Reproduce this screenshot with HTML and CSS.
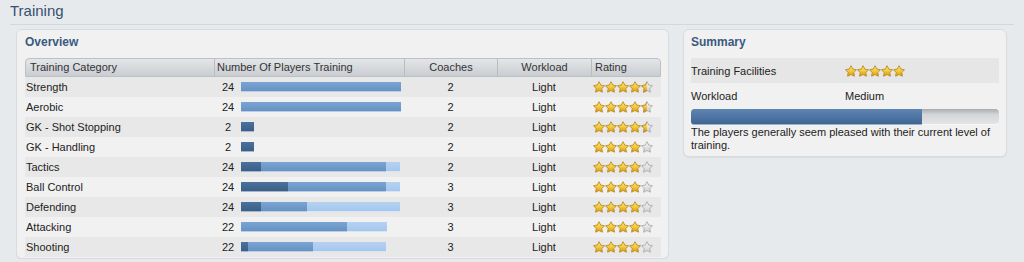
FILE: index.html
```html
<!DOCTYPE html>
<html lang="en">
<head>
  <meta charset="UTF-8">
  <title>Training</title>
  <link rel="stylesheet" href="styles.css">
</head>
<body>
  <h1 class="page-title">Training</h1>

  <div class="content">
    <div class="card overview">
      <h2>Overview</h2>
      <div class="grid">
        <div class="row head">
          <div class="cell cat">Training Category</div>
          <div class="cell num">Number Of Players Training</div>
          <div class="cell mid">Coaches</div>
          <div class="cell mid">Workload</div>
          <div class="cell rate">Rating</div>
        </div>

        <div class="row">
          <div class="cell cat">Strength</div>
          <div class="cell num"><span class="count">24</span><span class="bar"><i class="mid-seg" style="width:160px"></i></span></div>
          <div class="cell mid">2</div>
          <div class="cell mid">Light</div>
          <div class="cell rate"><svg class="stars"><use href="#s-full" x="0"/><use href="#s-full" x="12"/><use href="#s-full" x="24"/><use href="#s-full" x="36"/><use href="#s-half" x="48"/></svg></div>
        </div>
        <div class="row">
          <div class="cell cat">Aerobic</div>
          <div class="cell num"><span class="count">24</span><span class="bar"><i class="mid-seg" style="width:160px"></i></span></div>
          <div class="cell mid">2</div>
          <div class="cell mid">Light</div>
          <div class="cell rate"><svg class="stars"><use href="#s-full" x="0"/><use href="#s-full" x="12"/><use href="#s-full" x="24"/><use href="#s-full" x="36"/><use href="#s-half" x="48"/></svg></div>
        </div>
        <div class="row">
          <div class="cell cat">GK - Shot Stopping</div>
          <div class="cell num"><span class="count">2</span><span class="bar"><i class="dark-seg" style="width:13px"></i></span></div>
          <div class="cell mid">2</div>
          <div class="cell mid">Light</div>
          <div class="cell rate"><svg class="stars"><use href="#s-full" x="0"/><use href="#s-full" x="12"/><use href="#s-full" x="24"/><use href="#s-full" x="36"/><use href="#s-half" x="48"/></svg></div>
        </div>
        <div class="row">
          <div class="cell cat">GK - Handling</div>
          <div class="cell num"><span class="count">2</span><span class="bar"><i class="dark-seg" style="width:13px"></i></span></div>
          <div class="cell mid">2</div>
          <div class="cell mid">Light</div>
          <div class="cell rate"><svg class="stars"><use href="#s-full" x="0"/><use href="#s-full" x="12"/><use href="#s-full" x="24"/><use href="#s-full" x="36"/><use href="#s-empty" x="48"/></svg></div>
        </div>
        <div class="row">
          <div class="cell cat">Tactics</div>
          <div class="cell num"><span class="count">24</span><span class="bar"><i class="dark-seg" style="width:20px"></i><i class="mid-seg" style="width:125px"></i><i class="light-seg" style="width:14px"></i></span></div>
          <div class="cell mid">2</div>
          <div class="cell mid">Light</div>
          <div class="cell rate"><svg class="stars"><use href="#s-full" x="0"/><use href="#s-full" x="12"/><use href="#s-full" x="24"/><use href="#s-full" x="36"/><use href="#s-empty" x="48"/></svg></div>
        </div>
        <div class="row">
          <div class="cell cat">Ball Control</div>
          <div class="cell num"><span class="count">24</span><span class="bar"><i class="dark-seg" style="width:47px"></i><i class="mid-seg" style="width:98px"></i><i class="light-seg" style="width:14px"></i></span></div>
          <div class="cell mid">3</div>
          <div class="cell mid">Light</div>
          <div class="cell rate"><svg class="stars"><use href="#s-full" x="0"/><use href="#s-full" x="12"/><use href="#s-full" x="24"/><use href="#s-full" x="36"/><use href="#s-empty" x="48"/></svg></div>
        </div>
        <div class="row">
          <div class="cell cat">Defending</div>
          <div class="cell num"><span class="count">24</span><span class="bar"><i class="dark-seg" style="width:20px"></i><i class="mid-seg" style="width:46px"></i><i class="light-seg" style="width:93px"></i></span></div>
          <div class="cell mid">3</div>
          <div class="cell mid">Light</div>
          <div class="cell rate"><svg class="stars"><use href="#s-full" x="0"/><use href="#s-full" x="12"/><use href="#s-full" x="24"/><use href="#s-full" x="36"/><use href="#s-empty" x="48"/></svg></div>
        </div>
        <div class="row">
          <div class="cell cat">Attacking</div>
          <div class="cell num"><span class="count">22</span><span class="bar"><i class="mid-seg" style="width:106px"></i><i class="light-seg" style="width:40px"></i></span></div>
          <div class="cell mid">3</div>
          <div class="cell mid">Light</div>
          <div class="cell rate"><svg class="stars"><use href="#s-full" x="0"/><use href="#s-full" x="12"/><use href="#s-full" x="24"/><use href="#s-full" x="36"/><use href="#s-empty" x="48"/></svg></div>
        </div>
        <div class="row">
          <div class="cell cat">Shooting</div>
          <div class="cell num"><span class="count">22</span><span class="bar"><i class="dark-seg" style="width:7px"></i><i class="mid-seg" style="width:65px"></i><i class="light-seg" style="width:73px"></i></span></div>
          <div class="cell mid">3</div>
          <div class="cell mid">Light</div>
          <div class="cell rate"><svg class="stars"><use href="#s-full" x="0"/><use href="#s-full" x="12"/><use href="#s-full" x="24"/><use href="#s-full" x="36"/><use href="#s-empty" x="48"/></svg></div>
        </div>
      </div>
    </div>

    <div class="card summary">
      <h2>Summary</h2>
      <div class="sum-row shaded">
        <span class="label">Training Facilities</span>
        <svg class="stars"><use href="#s-full" x="0"/><use href="#s-full" x="12"/><use href="#s-full" x="24"/><use href="#s-full" x="36"/><use href="#s-full" x="48"/></svg>
      </div>
      <div class="sum-row">
        <span class="label">Workload</span>
        <span>Medium</span>
      </div>
      <div class="meter"><div class="meter-fill" style="width:75%"></div></div>
      <p class="note">The players generally seem pleased with their current level of training.</p>
    </div>
  </div>

  <!-- shared star shapes -->
  <svg class="defs" width="0" height="0">
    <defs>
      <linearGradient id="g-gold" x1="0" y1="0" x2="0" y2="1">
        <stop offset="0" stop-color="#fde98a"/>
        <stop offset="0.55" stop-color="#f2c534"/>
        <stop offset="1" stop-color="#d99a12"/>
      </linearGradient>
      <linearGradient id="g-grey" x1="0" y1="0" x2="0" y2="1">
        <stop offset="0" stop-color="#f4f4f4"/>
        <stop offset="1" stop-color="#d2d2d2"/>
      </linearGradient>
      <clipPath id="left-half"><rect x="0" y="0" width="6" height="12"/></clipPath>
      <symbol id="s-full" viewBox="0 0 12 12" width="12" height="12">
        <path d="M6 0.7 L7.76 4.07 L11.5 4.71 L8.85 7.43 L9.4 11.2 L6 9.5 L2.6 11.2 L3.15 7.43 L0.5 4.71 L4.24 4.07 Z" fill="url(#g-gold)" stroke="#b38320" stroke-width="0.8" stroke-linejoin="round"/>
      </symbol>
      <symbol id="s-empty" viewBox="0 0 12 12" width="12" height="12">
        <path d="M6 0.7 L7.76 4.07 L11.5 4.71 L8.85 7.43 L9.4 11.2 L6 9.5 L2.6 11.2 L3.15 7.43 L0.5 4.71 L4.24 4.07 Z" fill="url(#g-grey)" stroke="#a6a6a6" stroke-width="0.8" stroke-linejoin="round"/>
      </symbol>
      <symbol id="s-half" viewBox="0 0 12 12" width="12" height="12">
        <use href="#s-empty"/>
        <g clip-path="url(#left-half)"><use href="#s-full"/></g>
      </symbol>
    </defs>
  </svg>
</body>
</html>
```

FILE: styles.css
```css
* {
  box-sizing: border-box;
}

body {
  margin: 0;
  background: #e7eaed;
  font-family: "Liberation Sans", Arial, sans-serif;
  font-size: 11px;
  color: #222;
}

.page-title {
  margin: 0 10px;
  height: 25px;
  line-height: 22px;
  font-size: 15px;
  font-weight: normal;
  color: #36506f;
  border-bottom: 1px solid #d3d8dd;
}

.content {
  display: flex;
  align-items: flex-start;
  gap: 14px;
  padding: 4px 17px 0 16px;
}

.card {
  background: #f1f1f1;
  border: 1px solid #d9dcdf;
  border-radius: 6px;
  box-shadow: 0 1px 1px rgba(0, 0, 0, 0.06);
}

.card h2 {
  margin: 0;
  font-size: 12px;
  line-height: 16px;
  font-weight: bold;
  color: #3a5a7f;
}

.overview {
  width: 653px;
  padding: 4px 7px 1px 8px;
}

.overview h2 {
  margin-bottom: 8px;
}

.row {
  display: grid;
  grid-template-columns: 189px 190px 93px 94px 1fr;
  align-items: center;
  height: 20px;
}

.row:nth-child(even) {
  background: #e8e8e8;
}

.row.head {
  height: 19px;
  background: linear-gradient(#e4e6e9, #c9cdd1);
  border: 1px solid #bdc1c6;
  border-radius: 4px 4px 0 0;
  color: #333;
}

.head .cell {
  height: 100%;
  line-height: 17px;
  border-right: 1px solid #b9bdc2;
}

.head .cell:last-child {
  border-right: none;
}

.head .cat {
  padding-left: 4px;
}

.head .rate {
  padding-left: 3px;
}

.cell {
  white-space: nowrap;
  overflow: hidden;
}

.cat {
  padding-left: 1px;
}

.num {
  display: flex;
  align-items: center;
  padding-left: 2px;
}

.count {
  width: 24px;
  text-align: center;
}

.bar {
  display: flex;
  height: 10px;
  margin-left: 1px;
}

.bar i {
  display: block;
  height: 10px;
  box-shadow: inset 0 -2px 0 -1px rgba(255, 255, 255, 0.55);
}

.dark-seg {
  background: linear-gradient(#4a729c, #385d86);
}

.mid-seg {
  background: linear-gradient(#7aa4d2, #6491c2);
}

.light-seg {
  background: linear-gradient(#b5d2f2, #a4c6ec);
}

.mid {
  text-align: center;
}

.rate {
  padding-left: 2px;
  display: flex;
  align-items: center;
}

.stars {
  width: 60px;
  height: 12px;
  display: block;
}

.summary {
  flex: 1;
  padding: 4px 7px 4px 7px;
}

.summary h2 {
  margin-bottom: 8px;
}

.sum-row {
  display: flex;
  align-items: center;
  height: 25px;
}

.sum-row.shaded {
  background: #e6e6e6;
}

.sum-row .label {
  width: 154px;
}

.meter {
  height: 16px;
  margin-top: 1px;
  border-radius: 4px;
  background: linear-gradient(#a9acb0, #d4d6d9 35%, #e4e5e7);
  overflow: hidden;
  box-shadow: inset 0 -2px 0 -1px rgba(255, 255, 255, 0.7);
}

.meter-fill {
  height: 100%;
  background: linear-gradient(#5f86b1, #4a71a0 60%, #3c6390);
  box-shadow: inset 0 -3px 0 -2px rgba(255, 255, 255, 0.5);
}

.note {
  margin: 0;
  line-height: 13px;
  padding-top: 1px;
}

.defs {
  display: block;
  width: 0;
  height: 0;
  overflow: hidden;
}
```
